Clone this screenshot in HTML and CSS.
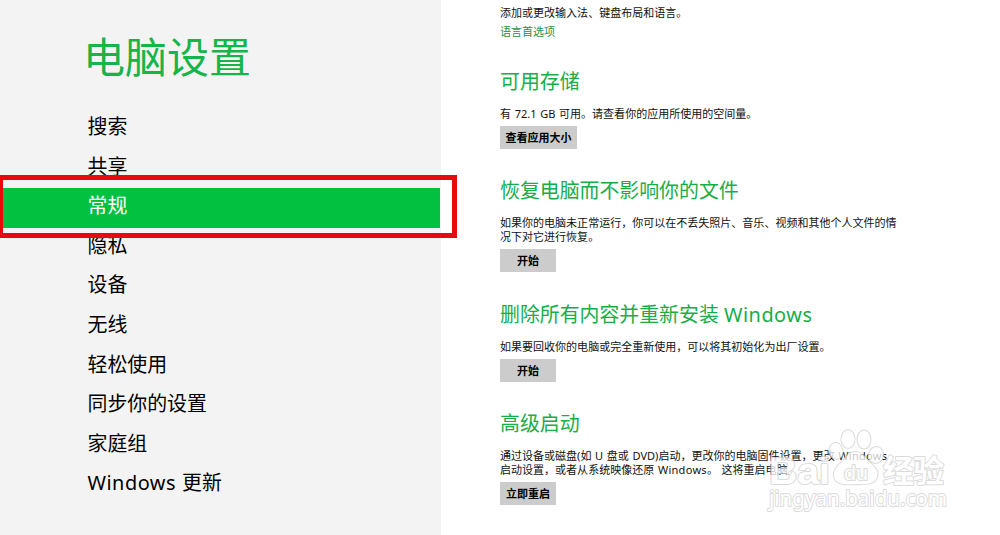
FILE: index.html
```html
<!DOCTYPE html>
<html lang="zh-CN">
<head>
  <meta charset="UTF-8">
  <meta name="viewport" content="width=device-width, initial-scale=1.0">
  <title>电脑设置</title>
  <link rel="stylesheet" href="styles.css">
</head>
<body>

<div class="page">
  <nav class="sidebar">
    <h1>电脑设置</h1>
    <ul class="menu">
      <li>搜索</li>
      <li>共享</li>
      <li class="active">常规<span class="highlight"></span></li>
      <li>隐私</li>
      <li>设备</li>
      <li>无线</li>
      <li>轻松使用</li>
      <li>同步你的设置</li>
      <li>家庭组</li>
      <li><span class="latin">Windows</span> 更新</li>
    </ul>
  </nav>

  <main class="content">
    <section class="language">
      <p>添加或更改输入法、键盘布局和语言。</p>
      <a class="link">语言首选项</a>
    </section>

    <section>
      <h2>可用存储</h2>
      <p>有 72.1 GB 可用。请查看你的应用所使用的空间量。</p>
      <button class="wide">查看应用大小</button>
    </section>

    <section>
      <h2>恢复电脑而不影响你的文件</h2>
      <p>如果你的电脑未正常运行，你可以在不丢失照片、音乐、视频和其他个人文件的情<br>况下对它进行恢复。</p>
      <button>开始</button>
    </section>

    <section>
      <h2>删除所有内容并重新安装 <span class="latin">Windows</span></h2>
      <p>如果要回收你的电脑或完全重新使用，可以将其初始化为出厂设置。</p>
      <button>开始</button>
    </section>

    <section>
      <h2>高级启动</h2>
      <p>通过设备或磁盘(如 U 盘或 DVD)启动，更改你的电脑固件设置，更改 <span class="latin">Windows</span><br>启动设置，或者从系统映像还原 <span class="latin">Windows</span>。 这将重启电脑。</p>
      <button>立即重启</button>
    </section>
  </main>

  <svg class="watermark" width="200" height="100" viewBox="0 0 200 100">
    <text class="logo" x="9" y="61" textLength="61" lengthAdjust="spacingAndGlyphs">Bai</text>
    <ellipse cx="88" cy="16" rx="6.5" ry="9"/>
    <ellipse cx="104" cy="16.5" rx="6.5" ry="9"/>
    <ellipse cx="76" cy="28" rx="6.5" ry="8" transform="rotate(-12 76 28)"/>
    <ellipse cx="116" cy="32" rx="7" ry="8" transform="rotate(20 116 32)"/>
    <path d="M95 29c7 0 9 5 14 10 6 5 10 9 8 15-2 6-8 8-21 7-12 1-20 0-22-7-1-6 2-10 8-15 5-5 6-10 13-10z"/>
    <text class="du" x="84" y="57" textLength="24" lengthAdjust="spacingAndGlyphs">du</text>
    <text class="cn" x="123" y="59" textLength="61">经验</text>
    <text class="url" x="9" y="83" textLength="178" lengthAdjust="spacingAndGlyphs">jingyan.baidu.com</text>
  </svg>
</div>

</body>
</html>
```
FILE: styles.css
```css
* {
  box-sizing: border-box;
}
body {
  margin: 0;
  background-color: #fff;
  color: #111;
  font-family: "Noto Sans", "Noto Sans CJK SC", sans-serif;
}
.page {
  position: relative;
  display: flex;
  height: 535px;
  overflow: hidden;
}
h1, h2, p, ul {
  margin: 0;
  padding: 0;
  font-weight: normal;
}
.latin {
  letter-spacing: 0.025em;
}

/* Menu lateral */
.sidebar {
  width: 441px;
  padding-top: 27px;
  background-color: #f3f3f3;
}
h1 {
  padding-left: 83px;
  font-size: 42px;
  line-height: 60px;
  color: #17b44a;
}
.menu {
  padding-top: 22px;
  list-style: none;
}
.menu li {
  height: 39.6px;
  padding-left: 87.5px;
  font-size: 19.9px;
  line-height: 35px;
  word-spacing: 1px;
  color: #000;
}
.menu .active {
  position: relative;
  margin-right: 1px;
  background-color: #02c140;
  color: #fff;
}
.highlight {
  position: absolute;
  left: -2px;
  top: -13px;
  width: 459px;
  height: 63px;
  border: 5px solid #e60a0a;
}

/* Contenido */
.content {
  flex: 1;
  padding: 6px 0 0 59px;
}
.content p {
  font-size: 11.03px;
  line-height: 14px;
  word-spacing: 0.8px;
  white-space: nowrap;
}
.link {
  display: block;
  margin-top: 5px;
  font-size: 11px;
  line-height: 14px;
  color: #1c9246;
}
h2 {
  height: 39px;
  font-size: 19.9px;
  line-height: 28px;
  white-space: nowrap;
  color: #17ad47;
}
section {
  margin-bottom: 28.3px;
}
.language {
  margin-bottom: 29px;
}
button {
  display: block;
  width: 56px;
  height: 23px;
  margin-top: 5px;
  padding: 0;
  border: none;
  background-color: #ccc;
  color: #000;
  font-family: inherit;
  font-size: 11px;
  font-weight: bold;
  line-height: 23px;
}
.wide {
  width: 77px;
}

/* Marca de agua */
.watermark {
  position: absolute;
  left: 760px;
  top: 423px;
  opacity: 0.75;
  fill: #fff;
  stroke: #d0d0d0;
  stroke-width: 2;
  stroke-linejoin: round;
  paint-order: stroke;
}
.logo {
  font-family: "Liberation Sans", sans-serif;
  font-size: 36px;
  font-weight: bold;
}
.du {
  font-family: "Liberation Sans", sans-serif;
  font-size: 20px;
}
.cn {
  font-family: "Noto Sans CJK SC", sans-serif;
  font-size: 31px;
  font-weight: bold;
}
.url {
  font-family: "Noto Sans", sans-serif;
  font-size: 21px;
}
```
